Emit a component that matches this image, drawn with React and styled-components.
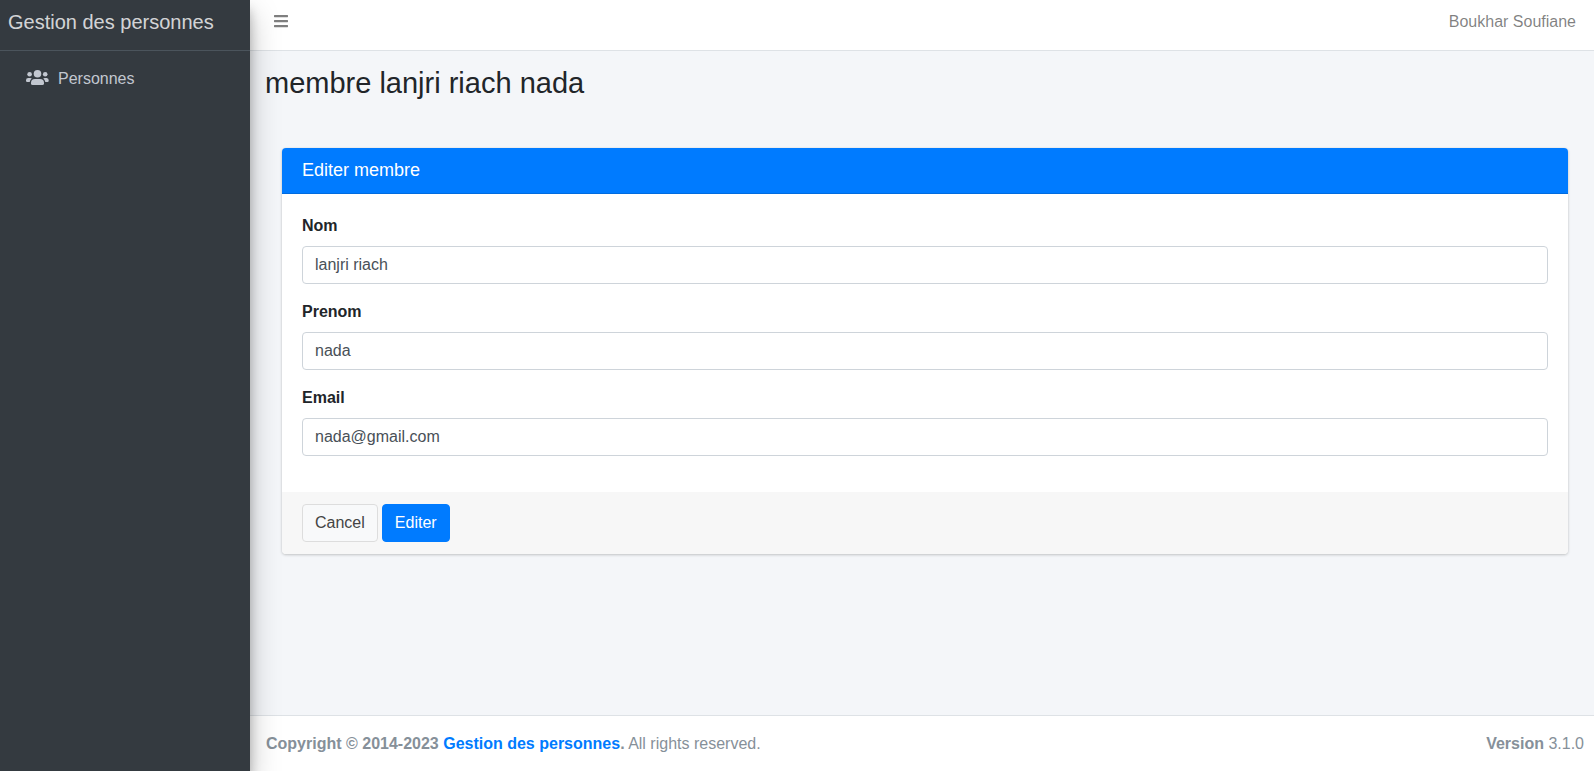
import React, { useState } from "react";
import styled, { createGlobalStyle } from "styled-components";
import { FaBars } from "react-icons/fa";

const GlobalStyle = createGlobalStyle`
  *, *::before, *::after { box-sizing: border-box; }
  body {
    margin: 0;
    font-family: "Liberation Sans", Arial, sans-serif;
    font-size: 16px;
    line-height: 24px;
    color: #212529;
    background: #f4f6f9;
  }
`;

const Layout = styled.div`
  display: flex;
  min-height: 100vh;
`;

const Sidebar = styled.aside`
  position: relative;
  z-index: 1;
  flex: 0 0 250px;
  background: #343a40;
  box-shadow: 0 14px 28px rgba(0, 0, 0, 0.25), 0 10px 10px rgba(0, 0, 0, 0.22);
`;

const Brand = styled.a`
  display: block;
  height: 51px;
  padding: 7px 8px;
  border-bottom: 1px solid #4b545c;
  font-size: 20px;
  line-height: 30px;
  color: rgba(255, 255, 255, 0.8);
  text-decoration: none;
  white-space: nowrap;
`;

const Menu = styled.nav`
  padding: 8px;
`;

const MenuLink = styled.a`
  display: flex;
  align-items: flex-start;
  gap: 8px;
  padding: 8px 16px;
  color: #c2c7d0;
  text-decoration: none;
`;

const MenuIcon = styled.svg`
  width: 26px;
  height: 15px;
  padding: 0 1px 0 2px;
  margin-top: 3px;
  fill: currentColor;
`;

const Page = styled.div`
  flex: 1;
  min-width: 0;
  display: flex;
  flex-direction: column;
`;

const Navbar = styled.header`
  display: flex;
  justify-content: space-between;
  align-items: flex-start;
  height: 51px;
  padding: 1px 2px 0 7px;
  background: #fff;
  border-bottom: 1px solid #dee2e6;
`;

const ToggleButton = styled.button`
  display: flex;
  align-items: center;
  height: 40px;
  padding: 0 16px;
  border: 0;
  background: none;
  color: rgba(0, 0, 0, 0.5);
  font-size: 16px;
`;

const UserLink = styled.a`
  padding: 9px 16px;
  color: rgba(0, 0, 0, 0.5);
  text-decoration: none;
`;

const Content = styled.main`
  flex: 1;
  padding: 15px;
`;

const Title = styled.h1`
  margin: 0;
  font-size: 29px;
  font-weight: 400;
  line-height: 34px;
`;

const Card = styled.form`
  margin: 48px 11px 0 17px;
  overflow: hidden;
  border-radius: 4px;
  background: #fff;
  box-shadow: 0 0 1px rgba(0, 0, 0, 0.13), 0 1px 3px rgba(0, 0, 0, 0.2);
`;

const CardHeader = styled.h2`
  margin: 0;
  padding: 11px 20px 12px;
  border-bottom: 1px solid rgba(0, 0, 0, 0.125);
  background: #007bff;
  color: #fff;
  font-size: 18px;
  font-weight: 400;
  line-height: 22px;
`;

const CardBody = styled.div`
  padding: 20px;
`;

const Field = styled.div`
  margin-bottom: 16px;
`;

const Label = styled.label`
  display: block;
  margin-bottom: 8px;
  font-weight: 700;
`;

const Input = styled.input`
  display: block;
  width: 100%;
  height: 38px;
  padding: 6px 12px;
  border: 1px solid #ced4da;
  border-radius: 4px;
  background: #fff;
  color: #495057;
  font: inherit;
`;

const CardFooter = styled.div`
  display: flex;
  gap: 4px;
  padding: 12px 20px;
  background: #f7f7f7;
`;

const Button = styled.button`
  height: 38px;
  padding: 6px 12px;
  border: 1px solid ${(p) => (p.$primary ? "#007bff" : "#dddddd")};
  border-radius: 4px;
  background: ${(p) => (p.$primary ? "#007bff" : "#f8f9fa")};
  color: ${(p) => (p.$primary ? "#fff" : "#444")};
  font: inherit;
`;

const Footer = styled.footer`
  display: flex;
  justify-content: space-between;
  padding: 16px 10px 15px 16px;
  border-top: 1px solid #dee2e6;
  background: #fff;
  color: #869099;
`;

const FooterLink = styled.a`
  color: #007bff;
  text-decoration: none;
`;

const fields = [
  { id: "nom", label: "Nom", type: "text", value: "lanjri riach" },
  { id: "prenom", label: "Prenom", type: "text", value: "nada" },
  { id: "email", label: "Email", type: "email", value: "nada@gmail.com" },
];

function UsersIcon() {
  return (
    <MenuIcon viewBox="0 0 23 15" aria-hidden="true">
      <circle cx="11.5" cy="3.8" r="3.8" />
      <circle cx="3.6" cy="4.3" r="2.3" />
      <circle cx="19.200" cy="4.3" r="2.3" />
      <path d="M9 9h5a4 4 0 0 1 4 4v.4a1.600 1.600 0 0 1-1.600 1.600H6.600A1.600 1.600 0 0 1 5 13.400V13a4 4 0 0 1 4-4z" />
      <path d="M2.300 8H4.300a2.300 2.300 0 0 1 1.500.6A5.500 5.500 0 0 0 3.700 12H1.200A1.200 1.200 0 0 1 0 10.800V10.300A2.300 2.300 0 0 1 2.300 8z" />
      <path d="M20.700 8H18.700a2.300 2.300 0 0 0-1.500.6A5.500 5.500 0 0 1 19.300 12h2.200A1.200 1.200 0 0 0 22.700 10.800V10.300A2.300 2.300 0 0 0 20.700 8z" />
    </MenuIcon>
  );
}

export default function App() {
  const [open, setOpen] = useState(true);
  return (
    <>
      <GlobalStyle />
      <Layout>
        {open && (
          <Sidebar>
            <Brand href="#">Gestion des personnes</Brand>
            <Menu>
              <MenuLink href="#personnes">
                <UsersIcon />
                Personnes
              </MenuLink>
            </Menu>
          </Sidebar>
        )}
        <Page>
          <Navbar>
            <ToggleButton type="button" aria-label="Menu" onClick={() => setOpen(!open)}>
              <FaBars aria-hidden="true" />
            </ToggleButton>
            <UserLink href="#profil">Boukhar Soufiane</UserLink>
          </Navbar>
          <Content>
            <Title>membre lanjri riach nada</Title>
            <Card onSubmit={(e) => e.preventDefault()}>
              <CardHeader>Editer membre</CardHeader>
              <CardBody>
                {fields.map((f) => (
                  <Field key={f.id}>
                    <Label htmlFor={f.id}>{f.label}</Label>
                    <Input id={f.id} name={f.id} type={f.type} defaultValue={f.value} />
                  </Field>
                ))}
              </CardBody>
              <CardFooter>
                <Button type="button">Cancel</Button>
                <Button type="submit" $primary>Editer</Button>
              </CardFooter>
            </Card>
          </Content>
          <Footer>
            <div>
              <strong>
                Copyright © 2014-2023 <FooterLink href="#">Gestion des personnes</FooterLink>.
              </strong>{" "}
              All rights reserved.
            </div>
            <div>
              <strong>Version</strong> 3.1.0
            </div>
          </Footer>
        </Page>
      </Layout>
    </>
  );
}
